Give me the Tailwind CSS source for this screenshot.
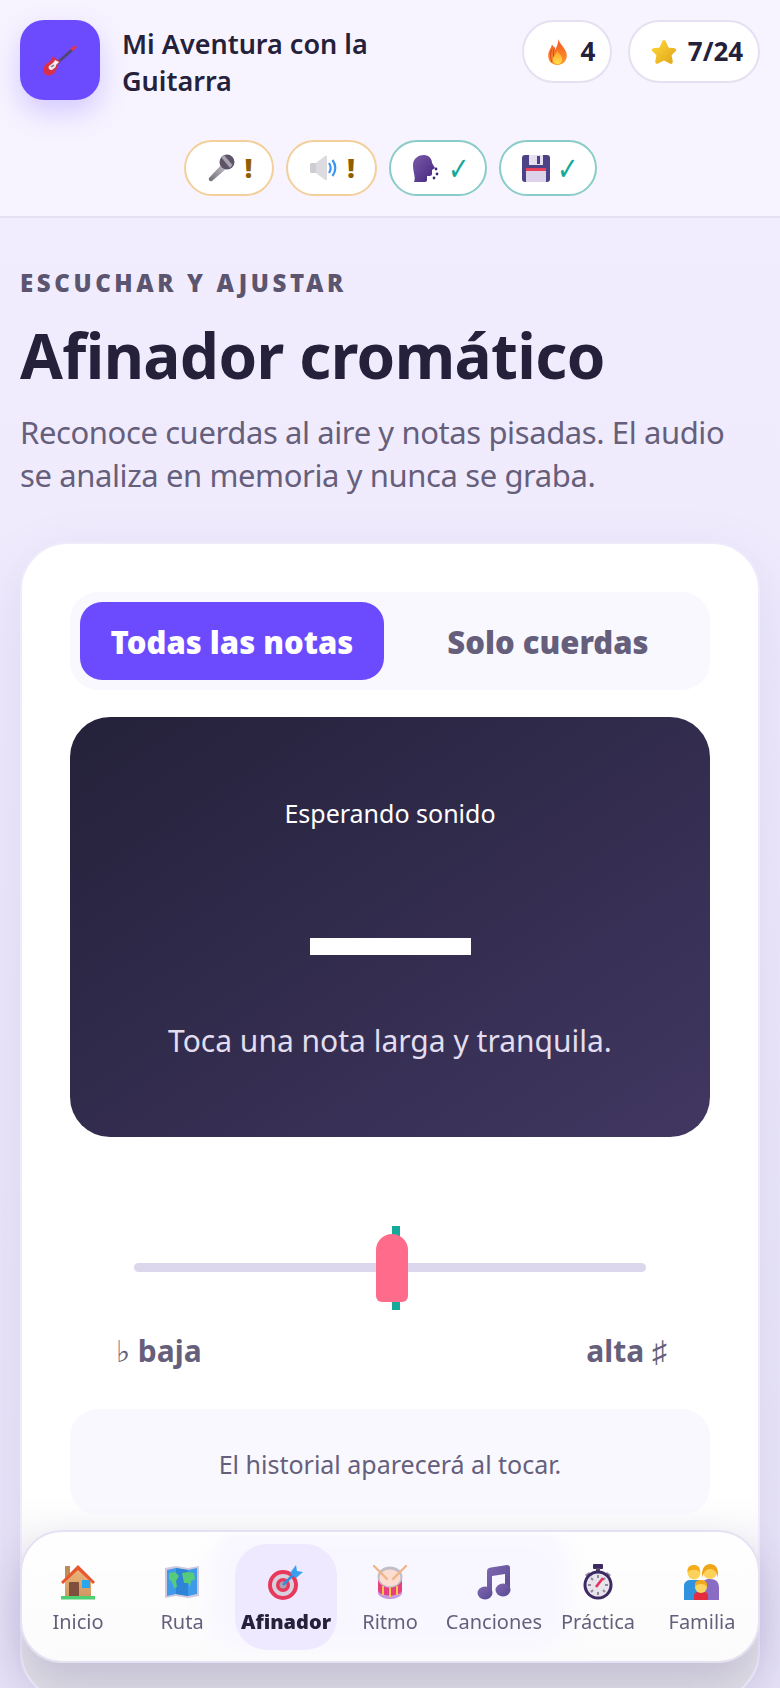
<!DOCTYPE html>
<html lang="es">
<head>
<meta charset="utf-8">
<title>Afinador cromático</title>
<script src="https://cdn.jsdelivr.net/npm/@tailwindcss/browser@4"></script>
</head>
<body class="w-[780px] h-[1688px] overflow-hidden relative bg-gradient-to-b from-[#f3eeff] to-[#e8e4f6] text-[#25213b] font-['Noto_Sans','Open_Sans',sans-serif]">
<svg width="0" height="0" class="absolute">
  <defs>
    <linearGradient id="gFire" x1="0" y1="0" x2="0" y2="1"><stop offset="0" stop-color="#f4561f"/><stop offset="1" stop-color="#ff9a2e"/></linearGradient>
    <linearGradient id="gFire2" x1="0" y1="0" x2="0" y2="1"><stop offset="0" stop-color="#ff9d2b"/><stop offset="1" stop-color="#ffe04a"/></linearGradient>
    <linearGradient id="gStar" x1="0" y1="0" x2="1" y2="1"><stop offset="0" stop-color="#ffd93b"/><stop offset="1" stop-color="#e0a418"/></linearGradient>
    <linearGradient id="gMic" x1="1" y1="0" x2="0" y2="1"><stop offset="0" stop-color="#c9c5cc"/><stop offset="1" stop-color="#6f6b73"/></linearGradient>
    <linearGradient id="gPurple" x1="0" y1="0" x2="1" y2="1"><stop offset="0" stop-color="#7a5aa8"/><stop offset="1" stop-color="#43257f"/></linearGradient>
    <linearGradient id="gHouse" x1="0" y1="0" x2="0" y2="1"><stop offset="0" stop-color="#eab67a"/><stop offset="1" stop-color="#cf9560"/></linearGradient>
    <linearGradient id="gNote" x1="0" y1="0" x2="1" y2="1"><stop offset="0" stop-color="#7f68b0"/><stop offset="1" stop-color="#584a93"/></linearGradient>
  </defs>
</svg>

<header class="h-[218px] bg-[#f7f4ff] border-b-2 border-[#e5e0f2] px-5 pt-5">
  <div class="flex justify-between items-start">
    <div class="flex items-center gap-[22px]">
      <div class="w-20 h-20 rounded-[24px] bg-[#6c4bff] shadow-[0_12px_28px_rgba(108,75,255,0.25)] flex items-center justify-center">
        <svg width="34" height="31" viewBox="0 0 34 31">
          <path d="M13 19 L30 4" stroke="#4f4770" stroke-width="3"/>
          <path d="M27 4 l4-3.5 l3 1.5 l-4 4z" fill="#e2354f"/>
          <path d="M10 11 L12 13 C14 15 17 15 17 17 L15 19 C16 23 13 23 12 27 C10 31 4 32 1 28 C-1 25 1 20 4 18 C7 17 8 15 10 11Z" fill="#d9304a"/>
          <path d="M16 17 L13 20 C13 23 11 23 9 25 C6 25 5 23 6 21 C8 19 11 18 12 15 C13 16 15 16 16 17Z" fill="#f6eff2"/>
          <path d="M8 22 L11 20" stroke="#8d8a9c" stroke-width="2"/>
        </svg>
      </div>
      <div class="w-[262px] mt-[4px] text-[27px] leading-[37px] font-semibold text-[#25213b]">Mi Aventura con la Guitarra</div>
    </div>
    <div class="flex gap-4">
      <div class="h-[63px] w-[90px] rounded-full bg-white border-2 border-[#e5e0f2] flex items-center justify-center gap-[13px] pl-[8px] text-[26px] font-bold">
        <svg width="21" height="26" viewBox="0 0 22 28"><path d="M12 0 C13 6 21 10 21 18 C21 24 16 28 11 28 C5 28 1 24 1 18 C1 13 4 11 5 6 C7 8 8 10 8 12 C10 9 12 5 12 0Z" fill="url(#gFire)"/><path d="M5 11 C3 15 3 20 5 25 M8 9 C6 13 6 19 8 24" fill="none" stroke="#d8431a" stroke-width="1"/><path d="M11 12 C12 16 16 17 16 22 C16 25 14 27 11 27 C8 27 6 25 6 22 C6 18 10 16 11 12Z" fill="url(#gFire2)"/></svg>
        <span>4</span>
      </div>
      <div class="h-[63px] w-[132px] rounded-full bg-white border-2 border-[#e5e0f2] flex items-center justify-center gap-[11px] pl-[6px] text-[26px] font-bold">
        <svg width="26" height="26" viewBox="0 0 27 27"><path d="M13.5 1 C15 1 15.5 2.5 16.5 5 L17.8 8 C18 8.6 18.6 9 19.2 9 L23.5 9.4 C26 9.7 27 11.4 25.3 13 L22 16 C21.5 16.5 21.3 17 21.5 17.7 L22.5 22.5 C23 25.3 21.3 26.5 19 25.2 L15 23 C14 22.4 13 22.4 12 23 L8 25.2 C5.7 26.5 4 25.3 4.5 22.5 L5.5 17.7 C5.7 17 5.5 16.5 5 16 L1.7 13 C0 11.4 1 9.7 3.5 9.4 L7.8 9 C8.4 9 9 8.6 9.2 8 L10.5 5 C11.5 2.5 12 1 13.5 1Z" fill="url(#gStar)"/></svg>
        <span>7/24</span>
      </div>
    </div>
  </div>
  <div class="mt-10 flex justify-center gap-3">
    <div class="h-[56px] w-[90px] rounded-full bg-white border-2 border-[#f3cf9c] flex items-center justify-center gap-[10px] pl-[2px]">
      <svg width="28" height="28" viewBox="0 0 28 28"><path d="M15 10 L2 24 C1 26 3 28 5 27 L19 15Z" fill="url(#gMic)"/><circle cx="20" cy="8" r="7.5" fill="#5d5468"/><path d="M14 3 L17 1 L25.5 11 L23 14Z" fill="#a8a4ad"/></svg>
      <span class="text-[26px] leading-none font-black text-[#8e5f00]">!</span>
    </div>
    <div class="h-[56px] w-[91px] rounded-full bg-white border-2 border-[#f3cf9c] flex items-center justify-center gap-[9px] pl-[3px]">
      <svg width="28" height="26" viewBox="0 0 28 26"><rect x="0" y="8" width="7" height="10" rx="1.5" fill="#cfcdd3"/><path d="M6 8 L15 1 C16 0 17 1 17 2 V24 C17 25 16 26 15 25 L6 18Z" fill="#dddbe0"/><path d="M19 8 C21 11 21 15 19 18 M22.5 5 C26 10 26 16 22.5 21" fill="none" stroke="#3c96f2" stroke-width="2.2"/></svg>
      <span class="text-[26px] leading-none font-black text-[#8e5f00]">!</span>
    </div>
    <div class="h-[56px] w-[98px] rounded-full bg-white border-2 border-[#8accc9] flex items-center justify-center gap-[6px] pl-[7px]">
      <svg width="28" height="27" viewBox="0 0 28 27"><path d="M2 10 C2 3 8 0 13 0 C18 0 21 4 21 8 L24 13 L21 15 V19 C21 21 19 21 16 21 V25 C16 26 15 27 14 27 H3 C5 22 2 18 2 10Z" fill="url(#gPurple)"/><circle cx="25" cy="14" r="1.4" fill="#43257f"/><circle cx="26" cy="19" r="1.4" fill="#43257f"/><circle cx="23" cy="23" r="1.4" fill="#43257f"/></svg>
      <span class="inline-block scale-x-[0.8] text-[32px] leading-none text-[#14a999]">✓</span>
    </div>
    <div class="h-[56px] w-[98px] rounded-full bg-white border-2 border-[#8accc9] flex items-center justify-center gap-[4px] pl-[8px]">
      <svg width="28" height="27" viewBox="0 0 28 27"><rect width="28" height="27" rx="3" fill="#4d4285"/><rect x="7" y="0" width="14" height="10" fill="#e5dff0"/><rect x="15" y="1" width="3" height="8" fill="#4d4285"/><rect x="4" y="13" width="20" height="14" fill="#dcd3ea"/><rect x="4" y="13" width="20" height="3" fill="#e6405a"/></svg>
      <span class="inline-block scale-x-[0.8] text-[32px] leading-none text-[#14a999]">✓</span>
    </div>
  </div>
</header>

<main class="px-5">
  <p class="mt-[50px] text-[24px] leading-[30px] font-black tracking-[3.6px] text-[#5b5570]">ESCUCHAR Y AJUSTAR</p>
  <h1 class="mt-[19px] text-[62px] leading-[76px] font-bold tracking-[-0.6px] text-[#25213b]">Afinador cromático</h1>
  <p class="mt-[18px] text-[31px] leading-[43px] tracking-[-0.4px] text-[#665f7b]">Reconoce cuerdas al aire y notas pisadas. El audio se analiza en memoria y nunca se graba.</p>

  <section class="relative mt-[45px] w-[740px] h-[1158px] rounded-[48px] bg-white border-2 border-[#efebfb] shadow-[0_20px_60px_rgba(90,70,170,0.12)] px-12 pt-12">
    <div class="absolute inset-x-0 top-[930px] bottom-0 rounded-b-[46px] bg-gradient-to-b from-white from-[10%] to-[#dfdee4]"></div>
    <div class="relative h-[98px] rounded-[28px] bg-[#f9f8ff] grid grid-cols-2 gap-3 p-[10px]">
      <div class="rounded-[22px] bg-[#6c4bff] text-white text-[31px] font-black flex items-center justify-center pt-[3px]">Todas las notas</div>
      <div class="text-[#665f7b] text-[31px] font-black flex items-center justify-center pt-[3px]">Solo cuerdas</div>
    </div>
    <div class="relative mt-[27px] h-[420px] rounded-[40px] bg-gradient-to-br from-[#24213a] to-[#413762] flex flex-col items-center">
      <p class="mt-[78px] text-[25px] leading-[36px] text-white">Esperando sonido</p>
      <div class="mt-[107px] w-[161px] h-[17px] bg-white"></div>
      <p class="mt-[64px] text-[30px] leading-[44px] text-[#e2deef]">Toca una nota larga y tranquila.</p>
    </div>
    <div class="relative mt-[89px] h-[84px]">
      <div class="absolute left-[64px] top-[37px] w-[512px] h-[9px] rounded-full bg-[#dcd7ec]"></div>
      <div class="absolute left-[322px] top-0 w-2 h-[84px] bg-[#14a999]"></div>
      <div class="absolute left-[306px] top-2 w-8 h-[68px] rounded-t-[16px] rounded-b-[6px] bg-[#ff6b8a]"></div>
    </div>
    <div class="relative mt-[21px] ml-[46px] w-[551px] flex justify-between text-[30px] leading-[40px] font-bold text-[#665f7b]">
      <span><span class="font-normal">♭</span> baja</span>
      <span>alta <span class="font-normal">♯</span></span>
    </div>
    <div class="relative mt-[38px] h-[106px] rounded-[28px] bg-[#f9f8ff] flex items-center justify-center pt-[5px] text-[25px] text-[#665f7b]">El historial aparecerá al tocar.</div>
    <div class="relative mx-auto mt-[20px] w-[360px] h-[112px] rounded-[28px] bg-[#cfc4ff]"></div>
  </section>
</main>

<nav class="absolute left-5 top-[1530px] w-[740px] h-[133px] rounded-[42px] bg-white/85 border-2 border-[#e5e0f2] shadow-[0_18px_40px_rgba(60,40,130,0.2)] backdrop-blur-md grid grid-cols-7 gap-[2px] items-center px-[5px]">
  <a class="h-[106px] rounded-[32px] flex flex-col items-center text-[20px] leading-[28px] text-[#665f7b]">
    <svg class="mt-[20px] mb-[8px]" width="36" height="36" viewBox="0 0 36 36"><rect x="5" y="2" width="5" height="14" fill="#c08b55"/><path d="M5 18 L18 5 L31 18 V34 H5Z" fill="url(#gHouse)"/><path d="M1 18 L18 1 L35 18 L33 20 L18 6 L3 20Z" fill="#e9572c"/><rect x="9" y="18" width="10" height="15" rx="1" fill="#7d4f3c"/><rect x="22" y="16" width="8" height="8" fill="#2ba6ee"/><rect x="1" y="32" width="34" height="3.5" fill="#4fcf72"/></svg>
    <span>Inicio</span>
  </a>
  <a class="h-[106px] rounded-[32px] flex flex-col items-center text-[20px] leading-[28px] text-[#665f7b]">
    <svg class="mt-[20px] mb-[8px]" width="36" height="36" viewBox="0 0 36 36"><path d="M1 4 L12 2 L24 4 L35 2 V32 L24 34 L12 32 L1 34Z" fill="#d2c8de"/><path d="M3 6 L12 4 L24 6 L33 4 V30 L24 32 L12 30 L3 32Z" fill="#3f9bea"/><path d="M12 4 V30 L24 32 V6Z" fill="#2e84d6"/><path d="M5 9 L11 8 L15 12 L12 17 L13 23 L10 24 L8 18 L5 15Z M18 9 L24 8 L30 9 L31 15 L27 17 L26 23 L24 19 L20 19 L19 14Z" fill="#56cb7c"/></svg>
    <span>Ruta</span>
  </a>
  <a class="h-[106px] rounded-[32px] bg-[#efe9ff] flex flex-col items-center text-[20px] leading-[28px] font-black text-[#25213b]">
    <svg class="mt-[20px] mb-[8px]" width="36" height="36" viewBox="0 0 36 36"><circle cx="15" cy="21" r="15" fill="#e8395c"/><circle cx="15" cy="21" r="11" fill="#d8d0dc"/><circle cx="15" cy="21" r="7" fill="#e8395c"/><circle cx="15" cy="21" r="3.5" fill="#a9a3ae"/><path d="M15 21 L26 10" stroke="#2f8fe0" stroke-width="2.5"/><path d="M22 9 L28 1 L29 7 L35 8 L28 14Z" fill="#3b9ff0"/></svg>
    <span>Afinador</span>
  </a>
  <a class="h-[106px] rounded-[32px] flex flex-col items-center text-[20px] leading-[28px] text-[#665f7b]">
    <svg class="mt-[20px] mb-[8px]" width="36" height="36" viewBox="0 0 36 36"><path d="M6 16 H30 V28 C30 36 6 36 6 28Z" fill="#e83f80"/><path d="M6 27 C9 33 27 33 30 27 V29 C27 37 9 37 6 29Z" fill="#c79be0"/><path d="M11 22 V31 M18 23 V33 M25 22 V31" stroke="#f8c44a" stroke-width="2"/><ellipse cx="18" cy="13" rx="12.5" ry="10.5" fill="#c2bdc6"/><ellipse cx="18" cy="14" rx="10.5" ry="8.5" fill="#fbdcd0"/><path d="M2 2 L15 15 M34 2 L21 15" stroke="#f0b585" stroke-width="2.4" stroke-linecap="round"/></svg>
    <span>Ritmo</span>
  </a>
  <a class="h-[106px] flex flex-col items-center text-[20px] leading-[28px] text-[#665f7b]">
    <svg class="mt-[20px] mb-[8px]" width="36" height="36" viewBox="0 0 36 36"><path d="M11 8 C11 5 12 4 15 3.5 L31 1 C33 1 34 2 34 4 V27 H29 V10 L16 12 V31 H11Z" fill="url(#gNote)"/><ellipse cx="9" cy="29" rx="7.5" ry="6.5" fill="url(#gNote)"/><ellipse cx="27" cy="26" rx="7.5" ry="6.5" fill="url(#gNote)"/></svg>
    <span>Canciones</span>
  </a>
  <a class="h-[106px] flex flex-col items-center text-[20px] leading-[28px] text-[#665f7b]">
    <svg class="mt-[20px] mb-[8px]" width="36" height="36" viewBox="0 0 36 36"><rect x="13" y="0" width="10" height="5" rx="1" fill="#3d2a63"/><rect x="16" y="4" width="4" height="5" fill="#58476f"/><path d="M27 8 l4 3 l-2 2 l-4-3z M9 8 l-4 3 l2 2 l4-3z" fill="#8f8a99"/><circle cx="18" cy="21" r="14.5" fill="#3d2a63"/><circle cx="18" cy="21" r="11.5" fill="#e8e4ec"/><path d="M18 11 v3 M18 28 v3 M8 21 h3 M25 21 h3 M11 14 l2 2 M25 14 l-2 2 M11 28 l2-2 M25 28 l-2-2" stroke="#8f8a99" stroke-width="2"/><path d="M16 23 L23 14" stroke="#e6305e" stroke-width="2.6"/></svg>
    <span>Práctica</span>
  </a>
  <a class="h-[106px] flex flex-col items-center text-[20px] leading-[28px] text-[#665f7b]">
    <svg class="mt-[20px] mb-[8px]" width="36" height="36" viewBox="0 0 36 36"><path d="M0 36 V22 C0 17 4 16 7 16 H15 C17 16 18 18 18 20 V36Z" fill="#2f93dd"/><path d="M18 36 V22 C18 17 20 15 26 15 C32 15 35 18 35 24 V36Z" fill="#8a6cc4"/><circle cx="10" cy="9" r="6.5" fill="#fbd35a"/><path d="M3.5 8 C3 2 7 1 10 1 C14 1 16 3 16 8 C13 5 8 5 3.5 8Z" fill="#f5ad1c"/><circle cx="26" cy="8" r="7" fill="#fcd25a"/><path d="M18 14 C17 3 22 0 26 0 C31 0 35 3 34 14 C33 8 30 5 26 5 C22 5 19 9 18 14Z" fill="#eea51a"/><path d="M10 36 V32 C10 28 13 28 17 28 C21 28 24 28 24 32 V36Z" fill="#e32b3f"/><circle cx="17" cy="23" r="6" fill="#fcd560"/><path d="M11 23 C10 17 14 16 17 16 C20 16 24 17 23 23 C21 19 13 19 11 23Z" fill="#f2a81e"/></svg>
    <span>Familia</span>
  </a>
</nav>
</body>
</html>
